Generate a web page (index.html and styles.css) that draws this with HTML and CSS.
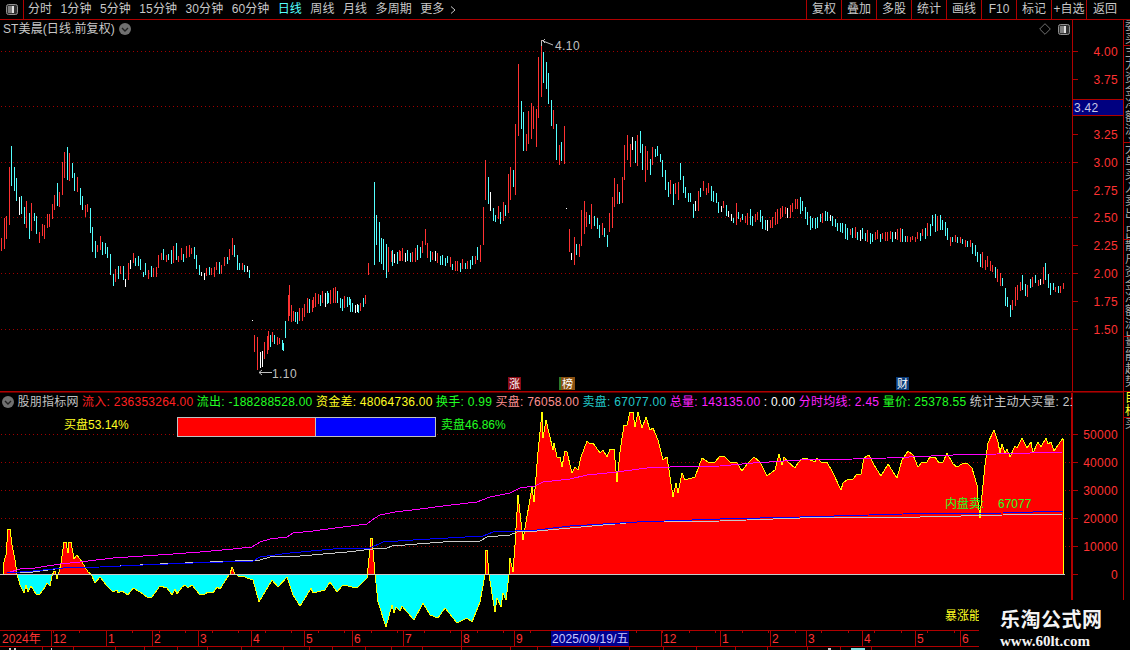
FILE: index.html
```html
<!DOCTYPE html>
<html lang="en">
<head>
    <meta charset="UTF-8">
    <meta name="viewport" content="width=device-width, initial-scale=1.0">
    <title>ST美晨 日线</title>
    <link rel="stylesheet" href="styles.css">
</head>
<body>
    <div class="toolbar">
        <div class="panel-toggle">
            <svg class="toggle-icon" viewBox="0 0 12 11"><rect x="0.5" y="0.5" width="11" height="10" rx="2" fill="#303030" stroke="#909090"/><rect x="2" y="2" width="4" height="7" fill="#808080"/><rect x="6" y="2" width="2" height="7" fill="#e0e0e0"/></svg>
        </div>
        <div class="periods">
            <span class="period">分时</span>
            <span class="period">1分钟</span>
            <span class="period">5分钟</span>
            <span class="period">15分钟</span>
            <span class="period">30分钟</span>
            <span class="period">60分钟</span>
            <span class="period period-active">日线</span>
            <span class="period">周线</span>
            <span class="period">月线</span>
            <span class="period">多周期</span>
            <span class="period">更多<svg class="chevron" viewBox="0 0 6 8"><path d="M1 0.5 L5 4 L1 7.5" fill="none" stroke="#c8c8c8"/></svg></span>
        </div>
        <div class="actions">
            <span class="action">复权</span>
            <span class="action">叠加</span>
            <span class="action">多股</span>
            <span class="action">统计</span>
            <span class="action">画线</span>
            <span class="action">F10</span>
            <span class="action">标记</span>
            <span class="action">+自选</span>
            <span class="action action-last">返回</span>
        </div>
    </div>

    <div class="workspace">
        <div class="charts">
            <svg id="chart" class="chart" viewBox="0 20 1123 630"></svg>

            <div class="title-row">
                <span class="stock-name">ST美晨(日线.前复权)</span>
                <svg class="round-btn" viewBox="0 0 12 12"><circle cx="6" cy="6" r="6" fill="#707070"/><path d="M3 5 L6 8 L9 5" fill="none" stroke="#202020" stroke-width="1.4"/></svg>
            </div>
            <div class="chart-tools">
                <svg class="diamond" viewBox="0 0 12 12"><path d="M6 0.7 L11.3 6 L6 11.3 L0.7 6 Z" fill="none" stroke="#707070"/></svg>
                <svg class="toggle-icon" viewBox="0 0 12 11"><rect x="0.5" y="0.5" width="11" height="10" rx="2" fill="#303030" stroke="#909090"/><rect x="2" y="2" width="4" height="7" fill="#808080"/><rect x="6" y="2" width="2" height="7" fill="#e0e0e0"/></svg>
            </div>

            <div class="legend">
                <svg class="round-btn" viewBox="0 0 12 12"><circle cx="6" cy="6" r="6" fill="#707070"/><path d="M3 5 L6 8 L9 5" fill="none" stroke="#202020" stroke-width="1.4"/></svg>
                <span class="indicator-name">股朋指标网</span>
                <span class="red">流入: 236353264.00</span>
                <span class="green">流出: -188288528.00</span>
                <span class="yellow">资金差: 48064736.00</span>
                <span class="green">换手: 0.99</span>
                <span class="pink">买盘: 76058.00</span>
                <span class="teal">卖盘: 67077.00</span>
                <span class="magenta">总量: 143135.00</span>
                <span class="white">: 0.00</span>
                <span class="magenta">分时均线: 2.45</span>
                <span class="green">量价: 25378.55</span>
                <span class="grey">统计主动大买量: 21</span>
            </div>
        </div>

        <div class="side-strip">
            <div class="side-block side-a">委买卖</div>
            <div class="side-block side-b">主力资金净额流入</div>
            <div class="side-block side-b">大单买入卖出占比</div>
            <div class="side-block side-b">散户资金净额流出</div>
            <div class="side-block side-c">量能趋势</div>
            <div class="side-block side-d side-hot">目标</div>
            <div class="side-block side-e">买</div>
        </div>
    </div>

    <div class="watermark">
        <div class="wm-name">乐淘公式网</div>
        <div class="wm-url">www.60lt.com</div>
    </div>

    <script src="chart.js"></script>
</body>
</html>
```

FILE: styles.css
```css
* {
    box-sizing: border-box;
    margin: 0;
    padding: 0;
}

body {
    width: 1130px;
    height: 650px;
    overflow: hidden;
    position: relative;
    background: #000;
    color: #c8c8c8;
    font-family: "Liberation Sans", "Noto Sans CJK SC", sans-serif;
    font-size: 12px;
}

.toolbar {
    display: flex;
    height: 20px;
    border-bottom: 1px solid #b00000;
    line-height: 19px;
}

.panel-toggle {
    width: 24px;
    border-right: 1px solid #b00000;
    display: flex;
    align-items: center;
    justify-content: center;
}

.toggle-icon {
    width: 12px;
    height: 11px;
    display: block;
}

.periods {
    display: flex;
    padding-left: 4px;
    gap: 8.4px;
}

.period {
    display: flex;
    align-items: center;
    letter-spacing: 0.1px;
}

.period-active {
    color: #54ffff;
}

.chevron {
    width: 6px;
    height: 8px;
    margin-left: 6px;
}

.actions {
    display: flex;
    margin-left: auto;
    margin-right: 7px;
}

.action {
    width: 35px;
    border-left: 1px solid #b00000;
    text-align: center;
}

.action-last {
    width: 37px;
}

.workspace {
    display: flex;
    height: 630px;
}

.charts {
    position: relative;
    width: 1123px;
    height: 630px;
}

.chart {
    display: block;
    width: 1123px;
    height: 630px;
}

.chart text {
    font-family: "Liberation Sans", "Noto Sans CJK SC", sans-serif;
    font-size: 12px;
}

.chart .axis-label {
    fill: #ff3232;
    letter-spacing: 0.3px;
}

.chart .date-label {
    fill: #ff3232;
}

.chart .cursor-price {
    fill: #c8c8e8;
    letter-spacing: 0.3px;
}

.chart .cursor-date {
    fill: #c8c8ff;
    letter-spacing: 0.1px;
}

.chart .extreme {
    fill: #c0c0c0;
    letter-spacing: 0.4px;
}

.chart .marker {
    fill: #fff;
    font-size: 11px;
}

.chart .ratio-buy,
.chart .sell-power {
    fill: #ffff22;
}

.chart .ratio-sell,
.chart .inner-sell {
    fill: #22ff22;
}

.title-row {
    position: absolute;
    top: 0;
    left: 3px;
    height: 18px;
    display: flex;
    align-items: center;
    gap: 4px;
    line-height: 18px;
    letter-spacing: 0.1px;
}

.round-btn {
    width: 12px;
    height: 12px;
    flex: none;
}

.chart-tools {
    position: absolute;
    top: 3px;
    left: 1039px;
    display: flex;
    align-items: center;
    gap: 7px;
}

.diamond {
    width: 12px;
    height: 12px;
}

.legend {
    position: absolute;
    top: 372px;
    left: 2px;
    width: 1070px;
    height: 20px;
    display: flex;
    align-items: center;
    gap: 3.4px;
    overflow: hidden;
    white-space: nowrap;
    letter-spacing: 0.25px;
    line-height: 20px;
}

.indicator-name {
    color: #c0c0c0;
}

.red { color: #ff2020; }
.green { color: #22ff22; }
.yellow { color: #ffff22; }
.pink { color: #ff9090; }
.teal { color: #20c8c8; }
.magenta { color: #ff22ff; }
.white { color: #fff; }
.grey { color: #c8c8c8; }

.side-strip {
    width: 7px;
    height: 580px;
    overflow: hidden;
    border-left: 1px solid #b00000;
    font-size: 12px;
    line-height: 13px;
    color: #a8a8a8;
}

.side-block {
    width: 14px;
    overflow: hidden;
    padding-left: 1px;
    border-bottom: 1px solid #b00000;
}

.side-a { height: 26px; }
.side-b { height: 97px; }
.side-c { height: 55px; }
.side-d { height: 26px; }

.side-e {
    height: 30px;
    border-bottom: none;
}

.side-hot {
    color: #ffff22;
}

.watermark {
    position: absolute;
    right: 0;
    bottom: 0;
    width: 151px;
    height: 50px;
    padding: 8px 0 0 21px;
    background: #000;
    color: #f4f4f4;
}

.wm-name {
    font-family: "Noto Sans CJK SC", sans-serif;
    font-size: 20px;
    font-weight: 700;
    line-height: 22px;
    letter-spacing: 0.5px;
}

.wm-url {
    margin-top: 3px;
    font-family: "Liberation Serif", serif;
    font-size: 15px;
    font-weight: 700;
    line-height: 17px;
}
```

FILE: chart.js
```js
const RED = '#ff3232';
const CYAN = '#54ffff';
const WHITE = '#ffffff';
const LINE_RED = '#b00000';
const DOT_RED = '#a00000';
const COLORS = { r: RED, c: CYAN, w: WHITE };

let out = '';

function line(x1, y1, x2, y2, color) {
    out += `<line x1="${x1}" y1="${y1}" x2="${x2}" y2="${y2}" stroke="${color}" shape-rendering="crispEdges"/>`;
}

function dotted(y) {
    out += `<line x1="1" y1="${y + 0.5}" x2="1072" y2="${y + 0.5}" stroke="${DOT_RED}" stroke-dasharray="1 3"/>`;
}

function rect(x, y, w, h, fill) {
    out += `<rect x="${x}" y="${y}" width="${w}" height="${h}" fill="${fill}"/>`;
}

function text(x, y, cls, str, anchor) {
    out += `<text x="${x}" y="${y}" class="${cls}" text-anchor="${anchor || 'start'}">${str}</text>`;
}

function bar(x, y1, y2, c) {
    rect(Math.floor(x), Math.round(y1), 1, Math.max(1, Math.round(y2 - y1)), COLORS[c]);
}

// traced bars, numbers are in 3x crop coordinates: x,top,bottom,color
function traced(baseX, baseY, data) {
    data.split(';').forEach(function(item) {
        const p = item.split(',');
        bar(baseX + p[0] / 3, baseY + p[1] / 3, baseY + p[2] / 3, p[3]);
    });
}

// small deterministic noise so the filler bars stay the same on every load
let seed = 12345;
function rnd() {
    seed = (seed * 1103515245 + 12345) & 0x7fffffff;
    return seed / 0x7fffffff;
}

// bars between envelope points: [x, top, bottom]
function envelope(points) {
    let prevMid = null;
    for (let i = 0; i < points.length - 1; i++) {
        const a = points[i];
        const b = points[i + 1];
        for (let x = a[0]; x < b[0]; x += 2.5) {
            const t = (x - a[0]) / (b[0] - a[0]);
            const top = a[1] + (b[1] - a[1]) * t;
            const bot = a[2] + (b[2] - a[2]) * t;
            // most bars fill a good part of the envelope, a few stick out of it
            const h = (bot - top) * (0.55 + rnd() * 0.5);
            const y = top + (bot - top - h) * rnd() + (rnd() - 0.5) * 4;
            const mid = y + h / 2;
            const roll = rnd();
            let c = prevMid !== null && mid < prevMid ? 'r' : 'c';
            if (roll < 0.2) c = c === 'r' ? 'c' : 'r';
            if (roll > 0.95) c = 'w';
            bar(x, y, y + h, c);
            prevMid = mid;
        }
    }
}

function poly(points, color) {
    out += `<polyline points="${points}" fill="none" stroke="${color}" stroke-width="1" shape-rendering="crispEdges"/>`;
}

/* ---------- grid ---------- */
[51, 106, 162, 217, 273, 329, 434, 462, 490, 518, 546].forEach(dotted);

/* ---------- candles ---------- */
traced(0, 130, '4,325,365,r;13,265,357,r;19,258,327,r;28,112,287,r;34,48,167,c;43,112,183,c;49,145,215,c;58,202,257,w;64,198,252,c;73,232,284,c;79,213,293,r;88,250,327,c;94,220,303,r;103,250,275,c;109,258,311,c;118,306,338,r;127,283,318,r;133,285,326,r;142,252,293,r;148,252,290,r;157,222,267,r;163,195,240,r;172,160,228,c;178,187,233,r;187,97,195,r;193,67,145,r;202,52,152,c;208,70,155,r;217,98,143,c;223,130,183,c;232,142,188,r;241,175,225,c;247,198,240,c;256,225,262,r;262,223,247,r;271,235,311,c;277,291,366,c;286,333,383,c;292,345,365,r;301,318,360,r;307,336,375,c;316,340,372,c;322,352,386,c;331,372,435,c;340,432,467,c;346,418,456,r;355,408,446,c;361,408,432,r;370,408,450,c;376,448,473,w;385,400,450,r;391,390,417,w;400,369,400,r;406,385,408,c;415,378,408,c;421,387,420,c;430,426,441,c;436,399,436,c;445,420,447,r;454,408,441,c;460,414,441,r;469,411,441,r;475,375,414,r;484,369,390,r;490,357,390,c;499,375,396,r;505,372,390,c;514,360,402,c;520,348,399,r;529,339,390,c;535,378,396,r;544,354,390,r;550,372,396,c;559,348,384,r;568,345,381,r;574,354,372,r;583,351,387,c;589,375,417,c;598,405,435,c;604,426,438,w;613,429,450,w;619,414,438,r;628,411,435,c;634,414,435,r;643,411,441,r;649,396,420,r;658,396,432,c;664,405,432,r;673,381,408,r;682,381,402,c;688,357,390,r;697,324,375,r;703,345,381,c;712,375,420,c;718,399,420,c;727,399,420,r;733,405,426,c;742,408,426,w;748,420,444,c');

bar(252, 320, 321, 'w');
bar(254, 335, 352, 'r');
bar(257, 337, 370, 'r');
bar(260, 352, 368, 'w');

envelope([[262, 350, 368], [268, 330, 350], [272, 328, 345], [277, 335, 345], [283, 340, 350], [289, 285, 320], [293, 310, 325],
    [297, 312, 325], [302, 305, 322], [307, 300, 315], [313, 293, 310], [320, 292, 308], [328, 290, 305], [335, 287, 305],
    [342, 295, 310], [350, 298, 312], [358, 303, 315], [366, 296, 305]]);

bar(368, 263, 275, 'r');
bar(374, 182, 265, 'c');
bar(376, 215, 245, 'c');
bar(379, 222, 262, 'c');
envelope([[381, 235, 268], [386, 240, 280], [392, 250, 265], [400, 250, 262], [410, 248, 262], [420, 245, 262], [425, 230, 255],
    [430, 250, 262], [440, 255, 265], [450, 258, 268], [460, 262, 272], [470, 258, 268], [480, 245, 262]]);

traced(480, 30, '0,645,695,r;10,530,645,r;16,390,510,r;25,440,522,c;31,487,543,w;40,535,573,c;46,555,575,c;55,528,567,r;61,545,582,c;70,515,573,r;76,525,558,c;85,432,548,r;91,410,510,r;100,420,472,c;106,282,495,r;115,102,317,r;124,213,297,c;130,245,362,c;139,312,362,r;145,243,342,r;154,220,328,r;160,228,297,r;169,237,351,r;175,82,265,r;184,30,200,r;190,67,160,c;199,97,177,c;205,130,222,c;214,210,288,c;220,240,297,r;229,282,390,c;238,345,405,r;244,336,393,c;253,288,402,r;260,535,537,w;268,597,665,r;274,668,690,w;283,621,705,r;289,642,675,c;298,642,680,r;304,540,647,r;313,513,612,r;319,546,591,r;328,555,582,c;334,522,597,r;343,558,588,c;352,564,597,c;358,585,624,c;367,579,615,r;373,594,621,c;382,615,651,c;388,549,606,r;397,501,594,r;403,444,531,r;412,462,522,r;418,486,522,c;427,441,519,r;433,345,450,r;442,315,390,r;451,342,411,r;457,321,360,w;466,333,399,c;472,315,408,r;481,303,369,c;487,342,420,c;496,348,456,r;502,363,420,r;511,387,435,c;517,351,405,r;526,357,381,c;532,348,378,c;541,372,396,c;547,390,441,c;556,420,480,c;565,456,501,c;571,450,492,r;580,462,525,c;586,459,492,r;595,456,510,r;601,399,450,c;610,438,489,c;616,471,504,c;625,489,516,c;631,489,516,c;640,522,564,c;646,513,543,w;655,483,543,r;661,474,501,c;670,453,483,r;679,474,495,r;685,459,489,r;694,468,513,c;700,483,516,c;709,489,519,c;715,516,549,c;724,528,546,w;730,513,534,r;739,525,558,c;745,543,561,w;754,552,573,w;760,564,579,c;769,519,585,r;775,546,567,c');

envelope([[740, 217, 222], [745, 213, 225], [750, 210, 228], [755, 213, 225], [760, 210, 226], [765, 222, 232], [770, 220, 232],
    [775, 212, 228], [780, 205, 222], [785, 208, 215], [790, 205, 218], [795, 200, 214], [800, 195, 212], [805, 205, 218],
    [810, 215, 230], [815, 218, 230], [820, 212, 226], [825, 210, 222], [830, 215, 225], [835, 215, 228], [840, 222, 232],
    [845, 225, 240], [850, 228, 238], [860, 228, 240], [870, 232, 245], [880, 230, 240], [890, 232, 240], [900, 228, 242],
    [910, 235, 242], [920, 232, 240], [930, 220, 235], [935, 213, 232], [940, 215, 230], [945, 220, 235], [950, 235, 245],
    [960, 237, 245], [970, 240, 250], [975, 245, 258], [980, 248, 270], [985, 255, 270], [990, 258, 270], [995, 265, 278], [1000, 270, 285]]);

traced(1000, 20, '2,760,800,r;7,775,800,c;16,805,858,c;22,830,860,c;31,855,890,c;37,840,870,r;46,800,858,r;52,795,840,r;61,785,812,r;67,765,810,c;76,792,828,c;82,795,830,r;91,778,806,c;97,770,800,r;106,765,790,c;115,780,797,r;121,778,795,w;130,740,790,r;136,730,780,c;145,762,805,c;151,790,825,c;160,790,812,c;166,802,818,r;175,798,820,c;181,798,818,r;190,790,808,r');

/* ---------- high / low flags ---------- */
out += '<path d="M541.5 46 V40.5 H544 M543 41 L553 45 M543 41 L545 39 M543 41 L545 43" fill="none" stroke="#c0c0c0"/>';
text(555, 50, 'extreme', '4.10');
out += '<path d="M259 372.5 H272 M259 372.5 L262 370 M259 372.5 L262 375" fill="none" stroke="#c0c0c0"/>';
text(272, 378, 'extreme', '1.10');

/* ---------- event markers ---------- */
rect(508, 377, 13, 13, '#8a0a14');
text(509, 388, 'marker', '涨');
rect(559, 377, 5, 13, '#2a7a2a');
rect(561, 377, 14, 13, '#8a5010');
text(562, 388, 'marker', '榜');
rect(896, 377, 13, 13, '#0a3a78');
text(897, 388, 'marker', '财');

/* ---------- sub chart ---------- */
const flow = '3,574 3,565 6,555 8,529 10,529 12,545 15,560 17,574 20,585 24,593 26,585 28,592 31,586 36,594 40,594 45,587 47,583 50,586 52,576 54,571 55,571 57,579 59,572 61,563 64,542 66,542 68,553 69,542 71,542 74,559 77,555 82,562 88,572 91,574 95,583 100,577 107,586 113,592 117,590 118,593 122,591 128,595 133,588 140,592 147,597 152,597 160,586 167,588 172,595 175,589 177,594 182,587 185,585 188,588 192,585 200,595 205,594 208,592 213,593 217,587 220,589 227,578 230,574 232,567 235,574 240,577 242,576 250,579 253,580 259,602 265,592 272,580 278,587 287,577 293,595 300,606 307,595 311,588 313,593 325,590 330,582 337,592 343,585 357,588 367,578 371,538 372,538 375,574 378,602 386,627 392,605 394,613 396,607 400,611 402,606 414,620 423,603 430,615 438,618 445,608 457,623 467,618 472,622 480,602 485,575 485,550 487,550 489,575 495,612 497,598 501,607 503,593 506,600 509,575 510,558 513,572 515,545 518,495 523,540 532,487 534,502 538,452 542,412 543,438 546,420 553,450 554,443 557,457 560,457 562,467 565,451 567,452 572,473 575,467 578,470 581,457 587,441 590,444 593,443 600,453 603,450 607,457 610,449 614,449 617,482 620,452 624,425 627,425 630,412 633,412 635,427 638,412 642,428 646,417 650,430 653,428 658,440 663,460 667,457 673,497 676,483 678,493 682,473 685,480 695,477 702,458 708,462 715,462 720,456 725,457 730,462 737,463 742,471 745,467 748,463 754,457 760,462 767,476 775,470 779,454 782,465 784,457 788,462 795,468 798,463 803,458 808,459 815,462 817,458 822,463 827,462 833,473 841,490 843,483 848,479 853,479 857,474 861,474 864,458 869,455 874,465 881,476 888,464 897,478 902,460 908,451 913,455 918,467 922,462 927,462 930,457 935,457 939,463 943,462 947,453 953,464 957,467 962,464 967,463 972,468 977,485 978,502 980,518 982,495 985,465 988,443 994,430 998,442 1000,453 1002,444 1005,453 1007,449 1010,457 1015,446 1017,448 1022,438 1027,448 1031,442 1033,453 1038,442 1041,447 1046,438 1048,444 1051,442 1054,451 1063,438 1064,574';

out += '<defs><clipPath id="above"><rect x="0" y="390" width="1072" height="184"/></clipPath><clipPath id="below"><rect x="0" y="574" width="1072" height="60"/></clipPath></defs>';
out += `<polygon points="${flow}" fill="#ff0000" clip-path="url(#above)" shape-rendering="crispEdges"/>`;
out += `<polygon points="${flow}" fill="#00ffff" clip-path="url(#below)" shape-rendering="crispEdges"/>`;
poly(flow, '#ffff00');

line(0, 574.5, 1065, 574.5, '#c8c8c8');

poly('7,573 20,569 35,568 60,564 80,562 113,558 143,556 173,554 200,552 233,549 252,547 260,542 270,539 287,537 293,533 313,531 343,527 367,524 375,518 380,515 395,512 420,509 443,506 477,502 490,497 510,493 520,488 535,486 543,482 570,479 587,475 617,472 647,468 670,467 720,466 753,463 800,460 853,459 887,458 953,455 997,454 1063,452', '#ff00ff');
poly('10,573 33,572 63,568 100,567 160,564 260,560 270,557 300,556 347,552 373,549 387,548 392,546 443,542 480,541 487,537 510,535 517,532 537,531 570,528 637,522 720,521 800,518 920,517 1003,515 1063,514', '#c8c8c8');
poly('7,573 33,571 63,568 100,567 143,565 193,563 253,561 260,557 290,553 333,549 370,548 383,542 413,540 483,536 493,532 537,530 570,526 637,522 720,519 800,517 903,514 1003,513 1063,511', '#0000ff');

/* ---------- buy / sell ratio bar ---------- */
text(64, 429, 'ratio-buy', '买盘53.14%');
rect(177, 417, 259, 20, '#c0c0c0');
rect(178, 418, 137, 18, '#ff0000');
rect(316, 418, 119, 18, '#0000ff');
text(441, 429, 'ratio-sell', '卖盘46.86%');

text(945, 508, 'inner-sell', '内盘卖:');
text(998, 508, 'inner-sell', '67077');
text(945, 620, 'sell-power', '暴涨能');

/* ---------- right axis ---------- */
[['4.00', 51], ['3.75', 79], ['3.25', 134], ['3.00', 162], ['2.75', 190], ['2.50', 217], ['2.25', 245], ['2.00', 273], ['1.75', 301], ['1.50', 329]].forEach(function(t) {
    line(1073, t[1] + 0.5, 1078, t[1] + 0.5, LINE_RED);
    text(1118, t[1] + 5, 'axis-label', t[0], 'end');
});
line(1073, 106.5, 1078, 106.5, LINE_RED);

[['50000', 434], ['40000', 462], ['30000', 490], ['20000', 518], ['10000', 546], ['0', 574]].forEach(function(t) {
    line(1073, t[1] + 0.5, 1078, t[1] + 0.5, LINE_RED);
    text(1118, t[1] + 5, 'axis-label', t[0], 'end');
});

line(1072.5, 20, 1072.5, 630, LINE_RED);
line(1071.5, 392, 1071.5, 630, LINE_RED);
line(0, 391.5, 1123, 391.5, LINE_RED);
line(0, 392.5, 1123, 392.5, '#600000');

rect(1073, 99, 50, 17, '#b00000');
rect(1073, 100, 50, 15, '#000080');
text(1074, 112, 'cursor-price', '3.42');

/* ---------- time axis ---------- */
line(0, 630.5, 1072, 630.5, LINE_RED);
line(0, 646.5, 1123, 646.5, LINE_RED);
for (let x = 26; x < 1072; x += 26.5) {
    line(Math.round(x) + 0.5, 631, Math.round(x) + 0.5, 633, LINE_RED);
}
[[51, '12'], [106, '1'], [152, '2'], [198, '3'], [251, '4'], [304, '5'], [352, '6'], [403, '7'], [461, '8'], [514, '9'],
    [661, '12'], [720, '1'], [770, '2'], [806, '3'], [862, '4'], [915, '5'], [960, '6']].forEach(function(t) {
    line(t[0] + 0.5, 631, t[0] + 0.5, 646, LINE_RED);
    text(t[0] + 2, 643, 'date-label', t[1]);
});
text(2, 643, 'date-label', '2024年');

rect(551, 631, 78, 15, '#000090');
text(552, 643, 'cursor-date', '2025/09/19/五');

/* status row under the time axis, only its top shows */
[42, 73, 115, 144, 177, 207, 241, 283, 309, 332, 365, 391, 422, 461, 510, 537, 599, 629, 663, 696, 735, 767, 807, 840, 871].forEach(function(x) {
    line(x + 0.5, 647, x + 0.5, 650, LINE_RED);
});
rect(9, 648, 2, 2, '#c8c8c8');
rect(14, 648, 2, 2, '#c8c8c8');
rect(51, 648, 1, 2, '#c8c8c8');
rect(828, 648, 3, 2, '#c8c8c8');
rect(851, 648, 14, 2, '#80e0e0');

document.getElementById('chart').innerHTML = out;
```
